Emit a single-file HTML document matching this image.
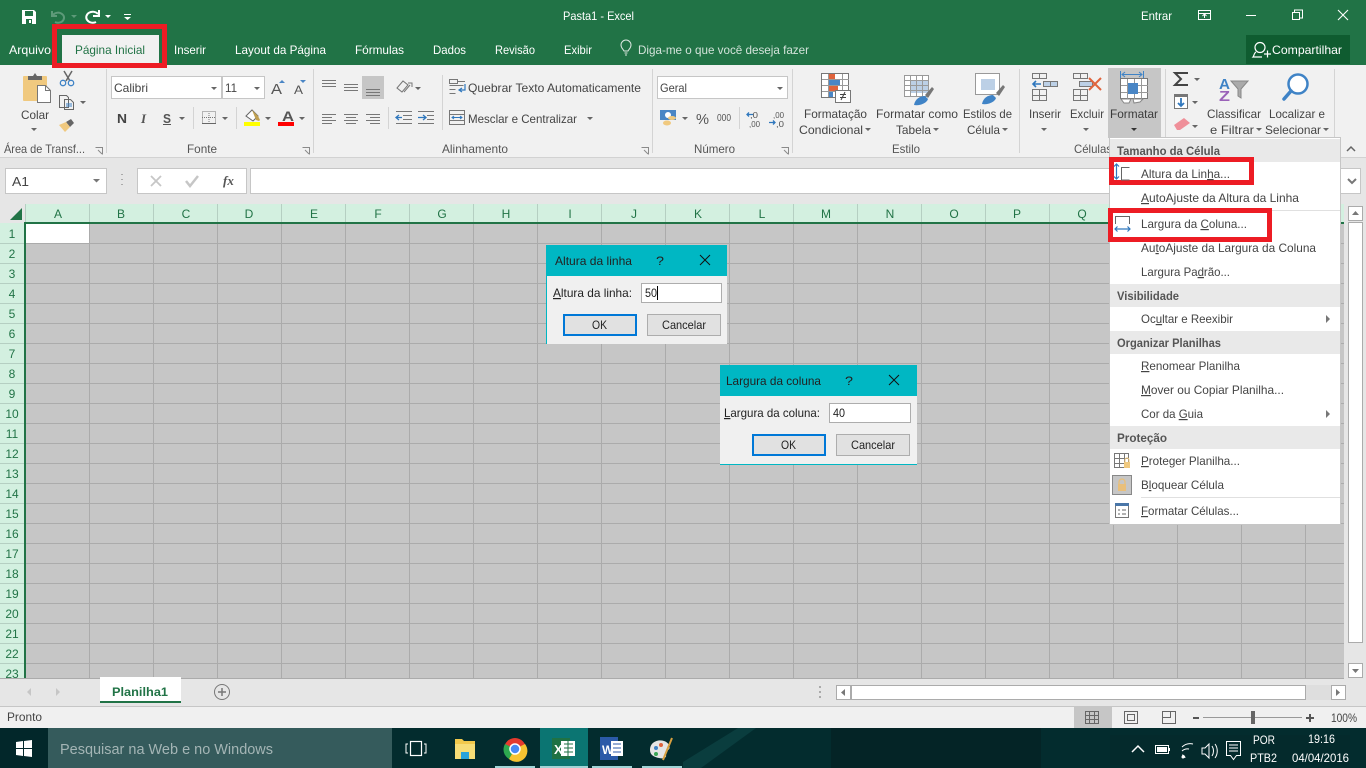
<!DOCTYPE html>
<html lang="pt-BR"><head><meta charset="utf-8"><title>Pasta1 - Excel</title>
<style>
html,body{margin:0;padding:0;width:1366px;height:768px;overflow:hidden;background:#e6e6e6}
svg{display:block;position:absolute;left:0;top:0}
text{font-family:"Liberation Sans",Arial,sans-serif;font-size:12px;fill:#444}
.w{fill:#fff}.t{fill:#e8f1ec}.g{fill:#217346}.b{font-weight:bold;fill:#555}.d{fill:#222}.s{fill:#dfe8e8}
.u{text-decoration:underline}
.l{fill:#555}
</style></head><body>
<svg width="1366" height="768" viewBox="0 0 1366 768" xmlns="http://www.w3.org/2000/svg">
<defs>
<pattern id="gr" x="25" y="224" width="64" height="20" patternUnits="userSpaceOnUse"><rect width="64" height="20" fill="#c6c6c6"/><rect x="0" width="1" height="20" fill="#ababab"/><rect y="19" width="64" height="1" fill="#ababab"/></pattern>
</defs>
<!-- title bar -->
<rect width="1366" height="66" fill="#217346"/>
<rect y="65" width="1366" height="92" fill="#f1f1f1"/>
<rect y="157" width="1366" height="1" fill="#d2d2d2"/>
<rect y="158" width="1366" height="46" fill="#e6e6e6"/>
<!-- QAT -->
<path d="M22 10h12l2 2v12H22z" fill="#fff"/><rect x="25" y="11" width="8" height="5" fill="#217346"/><rect x="26" y="19" width="6" height="5" fill="#217346"/><rect x="29" y="20" width="2" height="3" fill="#fff"/>
<path d="M53 15a6 5 0 1 1 2 7M52 11v5h5" fill="none" stroke="#5d9a79" stroke-width="2"/>
<path d="M98 14a6.500 5.500 0 1 0-2 8M99 10v6h-6" fill="none" stroke="#fff" stroke-width="2"/>
<path d="M71 15h6l-3 3z" fill="#5d9a79"/><path d="M105 15h6l-3 3z" fill="#fff"/>
<path d="M124 14h7v1h-7zM124 17h7l-3.500 3z" fill="#fff"/>
<text class="w" x="563" y="20" textLength="71" lengthAdjust="spacingAndGlyphs">Pasta1 - Excel</text>
<text class="w" x="1141" y="20" textLength="31" lengthAdjust="spacingAndGlyphs">Entrar</text>
<path d="M1198.500 10.500h12v9h-12zM1198.500 13.500h12M1204.500 18v-4M1202.500 16l2-2 2 2" fill="none" stroke="#fff"/>
<rect x="1246" y="15" width="10" height="1" fill="#fff"/>
<path d="M1292.500 12.500h7v7h-7zM1294.500 12v-2h8v8h-3" fill="none" stroke="#fff"/>
<path d="M1338 10l10 10M1348 10l-10 10" stroke="#fff" stroke-width="1.100"/>
<!-- tabs -->
<rect x="62" y="35" width="97" height="31" fill="#f1f1f1"/>
<text class="w" x="9" y="54" textLength="42" lengthAdjust="spacingAndGlyphs">Arquivo</text>
<text class="g" x="75" y="54" textLength="70" lengthAdjust="spacingAndGlyphs">Página Inicial</text>
<text class="w" x="174" y="54" textLength="32" lengthAdjust="spacingAndGlyphs">Inserir</text>
<text class="w" x="235" y="54" textLength="91" lengthAdjust="spacingAndGlyphs">Layout da Página</text>
<text class="w" x="355" y="54" textLength="49" lengthAdjust="spacingAndGlyphs">Fórmulas</text>
<text class="w" x="433" y="54" textLength="33" lengthAdjust="spacingAndGlyphs">Dados</text>
<text class="w" x="495" y="54" textLength="40" lengthAdjust="spacingAndGlyphs">Revisão</text>
<text class="w" x="564" y="54" textLength="28" lengthAdjust="spacingAndGlyphs">Exibir</text>
<path d="M624 51c-1-2-3-3-3-6a5 5 0 0 1 10 0c0 3-2 4-3 6zM624.500 53h3M625 55h2" fill="none" stroke="#dfe9e3"/>
<text class="t" style="fill:#d3e3da" x="638" y="54" textLength="171" lengthAdjust="spacingAndGlyphs">Diga-me o que você deseja fazer</text>
<rect x="1246" y="35" width="104" height="29" fill="#0f5c30"/>
<ellipse cx="1260" cy="47.500" rx="5" ry="5" fill="none" stroke="#fff" stroke-width="1.200"/><path d="M1256 52c-2 1-2 4-3 5h9M1264 54h7M1267.500 50.500v7" fill="none" stroke="#fff" stroke-width="1.200"/>
<text class="w" x="1272" y="54" textLength="70" lengthAdjust="spacingAndGlyphs">Compartilhar</text>
<!-- red box tab -->
<path d="M52 24h115v44H52zM57 29v34h105V29z" fill="#ed1c24" fill-rule="evenodd"/>
<!-- ribbon separators -->
<path d="M106.500 69v84M313.500 69v84M652.500 69v84M792.500 69v84M1019.500 69v84M1165.500 69v68M1334.500 69v68M193.500 107v22M236.500 107v22M388.500 107v22M442.500 75v55M739.500 107v22" stroke="#d4d4d4"/>
<!-- group labels -->
<text class="l" x="4" y="153" textLength="81" lengthAdjust="spacingAndGlyphs">Área de Transf...</text>
<text class="l" x="187" y="153" textLength="30" lengthAdjust="spacingAndGlyphs">Fonte</text>
<text class="l" x="442" y="153" textLength="66" lengthAdjust="spacingAndGlyphs">Alinhamento</text>
<text class="l" x="694" y="153" textLength="41" lengthAdjust="spacingAndGlyphs">Número</text>
<text class="l" x="892" y="153" textLength="28" lengthAdjust="spacingAndGlyphs">Estilo</text>
<text class="l" x="1074" y="153" textLength="38" lengthAdjust="spacingAndGlyphs">Células</text>
<path d="M95.500 147.500h7v7M98 150l4 4M302.500 147.500h7v7M305 150l4 4M641.500 147.500h7v7M644 150l4 4M781.500 147.500h7v7M784 150l4 4" fill="none" stroke="#8a8a8a"/>
<!-- clipboard -->
<rect x="23" y="76" width="24" height="25" rx="1" fill="#f0c97f"/><path d="M28 80v-4h5l2-3 2 3h5v4z" fill="#666"/>
<path d="M37.500 85.500h8l5 5v12h-13z" fill="#fff" stroke="#777"/><path d="M45.500 85.500v5h5" fill="none" stroke="#777"/>
<text class="d" style="fill:#444" x="21" y="119" textLength="28" lengthAdjust="spacingAndGlyphs">Colar</text>
<path d="M64 71l6 10M72 71l-6 10" stroke="#666" stroke-width="1.500"/><circle cx="63" cy="83" r="2.700" fill="none" stroke="#3f83c6" stroke-width="1.300"/><circle cx="71" cy="83" r="2.700" fill="none" stroke="#3f83c6" stroke-width="1.300"/>
<path d="M59.500 95.500h7l2 2v10h-9zM64.500 99.500h6l3 3v7h-9z" fill="#f1f1f1" stroke="#666"/><path d="M66 104h6M66 106h6" stroke="#3f83c6"/>
<path d="M66 122l5-3 3 4-4 4z" fill="#666"/><path d="M59 125l7-3 4 5-5 5z" fill="#f0c97f"/>
<!-- font controls -->
<rect x="111.500" y="76.500" width="110" height="22" fill="#fff" stroke="#c6c6c6"/><rect x="222.500" y="76.500" width="42" height="22" fill="#fff" stroke="#c6c6c6"/>
<text x="114" y="92" textLength="34" lengthAdjust="spacingAndGlyphs">Calibri</text>
<text x="225" y="92" textLength="12" lengthAdjust="spacingAndGlyphs">11</text>
<text x="271" y="94" style="font-size:15px;fill:#555" textLength="11" lengthAdjust="spacingAndGlyphs">A</text><path d="M279 83h6l-3-3z" fill="#4a86c5"/>
<text x="294" y="94" style="font-size:12px;fill:#555" textLength="9" lengthAdjust="spacingAndGlyphs">A</text><path d="M300 80h6l-3 3z" fill="#4a86c5"/>
<text x="117" y="123" style="font-weight:bold;font-size:13px;fill:#444" textLength="10" lengthAdjust="spacingAndGlyphs">N</text>
<text x="141" y="123" style="font-style:italic;font-family:'Liberation Serif',serif;font-weight:bold;font-size:13px;fill:#555">I</text>
<text x="163" y="123" style="font-weight:bold;font-size:13px;fill:#555" textLength="8" lengthAdjust="spacingAndGlyphs">S</text><rect x="163" y="124" width="8" height="1" fill="#555"/>
<path d="M202.500 111.500h13v12h-13zM209 111v12M202 117.500h14" fill="none" stroke="#777" stroke-dasharray="1 1"/><rect x="202" y="123" width="14" height="1" fill="#666"/>
<path d="M246 116l6-6 6 6-5 5z" fill="#fff" stroke="#666"/><path d="M252 110l6 6 2 4-1 1-3-1z" fill="#c0a050"/><rect x="244" y="122" width="16" height="4" fill="#ffff00"/>
<text x="282" y="121" style="font-size:14px;font-weight:bold;fill:#555" textLength="12" lengthAdjust="spacingAndGlyphs">A</text><rect x="278" y="122" width="16" height="4" fill="#ff0000"/>
<!-- alignment -->
<rect x="362" y="76" width="22" height="23" fill="#c6c6c6"/>
<path d="M322 80.500h14M322 83.500h14M322 86.500h14M344 84.500h14M344 87.500h14M344 90.500h14M366 89.500h14M366 92.500h14M366 95.500h14" stroke="#777"/>
<path d="M397 88l6-7 5 4-6 7zM404 92l6-7M408 83h4v4" fill="none" stroke="#777"/>
<path d="M322 114.500h14M322 117.500h10M322 120.500h14M322 123.500h10M344 114.500h14M346 117.500h10M344 120.500h14M346 123.500h10M366 114.500h14M370 117.500h10M366 120.500h14M370 123.500h10M396 111.500h16M403 115.500h9M403 119.500h9M396 123.500h16M418 111.500h16M427 115.500h7M427 119.500h7M418 123.500h16" stroke="#777"/>
<path d="M396 117.500h6M399 115l-3 2.500 3 2.500M418 117.500h7M423 115l3 2.500-3 2.500" fill="none" stroke="#2f77bd" stroke-width="1.300"/>
<path d="M449.500 79.500h8v4h-8zM457 81.500h8M449.500 85.500h14M449.500 89.500h6M449.500 93.500h6" fill="none" stroke="#777"/><path d="M465 84v6h-5M462 88l-3 2 3 2" fill="none" stroke="#2f77bd" stroke-width="1.200"/>
<text x="468" y="92" textLength="173" lengthAdjust="spacingAndGlyphs">Quebrar Texto Automaticamente</text>
<path d="M449.500 110.500h15v14h-15zM449.500 114.500h15M449.500 120.500h15" fill="none" stroke="#777"/><path d="M452 117.500h10M454 116l-2 1.500 2 1.500M460 116l2 1.500-2 1.500" fill="none" stroke="#2f77bd"/>
<text x="468" y="123" textLength="109" lengthAdjust="spacingAndGlyphs">Mesclar e Centralizar</text>
<!-- number -->
<rect x="657.500" y="76.500" width="130" height="22" fill="#fff" stroke="#c6c6c6"/>
<text x="660" y="92" textLength="27" lengthAdjust="spacingAndGlyphs">Geral</text>
<rect x="660" y="110" width="16" height="10" fill="#4a86c5"/><circle cx="668" cy="115" r="3" fill="#fff"/><ellipse cx="672" cy="118" rx="4" ry="2" fill="#f0c97f"/><ellipse cx="667" cy="123" rx="4" ry="2.500" fill="#f0c97f"/>
<text x="696" y="124" style="font-size:15px;fill:#555" textLength="13" lengthAdjust="spacingAndGlyphs">%</text>
<text x="717" y="121" style="font-size:10px;fill:#555" textLength="14" lengthAdjust="spacingAndGlyphs">000</text>
<text x="750" y="118" style="font-size:8px;fill:#555" textLength="8" lengthAdjust="spacingAndGlyphs">,0</text><text x="749" y="127" style="font-size:8px;fill:#555" textLength="11" lengthAdjust="spacingAndGlyphs">,00</text>
<text x="773" y="118" style="font-size:8px;fill:#555" textLength="11" lengthAdjust="spacingAndGlyphs">,00</text><text x="776" y="127" style="font-size:8px;fill:#555" textLength="8" lengthAdjust="spacingAndGlyphs">,0</text>
<path d="M747 114.500h6M749 112.500l-2 2 2 2M769 122.500h6M773 120.500l2 2-2 2" fill="none" stroke="#2f77bd" stroke-width="1.300"/>
<!-- cond fmt -->
<rect x="821.500" y="73.500" width="27" height="24" fill="#fff" stroke="#777"/><path d="M828.500 74v23M842.500 74v23M822 79.500h27M822 85.500h27M822 91.500h27" stroke="#999"/>
<rect x="829" y="74" width="6" height="5" fill="#e0633c"/><rect x="829" y="80" width="11" height="5" fill="#4a86c5"/><rect x="829" y="86" width="9" height="5" fill="#e0633c"/><rect x="829" y="92" width="4" height="5" fill="#4a86c5"/>
<rect x="835.500" y="90.500" width="15" height="12" fill="#fff" stroke="#777"/><path d="M840 94.500h6M840 97.500h6M845 92l-4 8" stroke="#444" fill="none"/>
<text x="804" y="118" textLength="63" lengthAdjust="spacingAndGlyphs">Formatação</text>
<text x="799" y="134" textLength="64" lengthAdjust="spacingAndGlyphs">Condicional</text>
<!-- table fmt -->
<rect x="904.500" y="75.500" width="24" height="21" fill="#fff" stroke="#999"/><rect x="910" y="80" width="18" height="13" fill="#bcd0e6"/><path d="M910.500 76v20M916.500 76v20M922.500 76v20M905 80.500h24M905 85.500h24M905 90.500h24" stroke="#9a9a9a"/>
<path d="M925 95l7-8 2 2-6 9z" fill="#777"/><path d="M914 105c1-6 6-9 11-9l3 3c-1 4-8 7-14 6z" fill="#3f83c6"/>
<text x="876" y="118" textLength="82" lengthAdjust="spacingAndGlyphs">Formatar como</text>
<text x="896" y="134" textLength="35" lengthAdjust="spacingAndGlyphs">Tabela</text>
<rect x="975.500" y="73.500" width="24" height="21" fill="#fff" stroke="#999"/><rect x="981" y="79" width="14" height="11" fill="#bcd0e6"/>
<path d="M996 93l7-8 2 2-6 9z" fill="#777"/><path d="M982 104c1-6 6-9 11-9l3 3c-1 4-8 7-14 6z" fill="#3f83c6"/>
<text x="963" y="118" textLength="49" lengthAdjust="spacingAndGlyphs">Estilos de</text>
<text x="967" y="134" textLength="33" lengthAdjust="spacingAndGlyphs">Célula</text>
<!-- cells -->
<path d="M1032.500 73.500h14v5h-14zM1039.500 73v5M1032.500 89.500h14v11h-14zM1039.500 90v11M1033 95.500h14" fill="none" stroke="#777"/>
<rect x="1043.500" y="81.500" width="14" height="5" fill="#bcd0e6" stroke="#777"/><path d="M1050.500 82v5" stroke="#777"/><path d="M1033 84h8M1036 81l-3 3 3 3" fill="none" stroke="#2f77bd" stroke-width="1.600"/>
<path d="M1073.500 73.500h14v5h-14zM1080.500 73v5M1073.500 89.500h14v11h-14zM1080.500 90v11M1074 95.500h14" fill="none" stroke="#777"/>
<rect x="1079.500" y="81.500" width="13" height="5" fill="#bcd0e6" stroke="#777"/>
<path d="M1089 78l12 12M1101 78l-12 12" stroke="#e0633c" stroke-width="2"/>
<text x="1029" y="118" textLength="32" lengthAdjust="spacingAndGlyphs">Inserir</text>
<text x="1070" y="118" textLength="34" lengthAdjust="spacingAndGlyphs">Excluir</text>
<rect x="1108" y="68" width="53" height="70" fill="#c6c6c6"/>
<path d="M1120.500 71v7M1143.500 71v7M1122 74.500h20M1125 72l-3 2.500 3 2.500M1139 72l3 2.500-3 2.500" fill="none" stroke="#3f83c6"/>
<rect x="1120.500" y="78.500" width="27" height="20" fill="#fff" stroke="#777"/><path d="M1127.500 79v20M1134.500 79v20M1141.500 79v20M1121 85.500h27M1121 92.500h27" stroke="#999"/><rect x="1128" y="83" width="10" height="11" fill="#4a86c5"/>
<path d="M1121 99h10l-2 4h-5zM1133 99h10l-3 3-6 1z" fill="#fff" stroke="#888"/>
<text x="1110" y="118" style="fill:#3a3a3a" textLength="48" lengthAdjust="spacingAndGlyphs">Formatar</text>
<!-- editing -->
<path d="M1188 73h-13l6 6-6 6h13" fill="none" stroke="#444" stroke-width="2"/>
<rect x="1174.500" y="94.500" width="13" height="14" fill="#fff" stroke="#777"/><rect x="1175" y="95" width="12" height="2" fill="#777"/><path d="M1181 98v8M1178 103l3 3 3-3" fill="none" stroke="#2f77bd" stroke-width="1.800"/>
<path d="M1174 125l10-7 6 5-10 7h-3z" fill="#ef8f99"/>
<text x="1219" y="89" style="font-size:15px;font-weight:bold;fill:#3f83c6" textLength="11" lengthAdjust="spacingAndGlyphs">A</text>
<text x="1219" y="101" style="font-size:15px;font-weight:bold;fill:#9a62b8" textLength="11" lengthAdjust="spacingAndGlyphs">Z</text>
<path d="M1231 81h17l-7 8v9l-3-2v-7z" fill="#aaa" stroke="#888"/>
<text x="1207" y="118" textLength="54" lengthAdjust="spacingAndGlyphs">Classificar</text>
<text x="1210" y="134" textLength="44" lengthAdjust="spacingAndGlyphs">e Filtrar</text>
<circle cx="1298" cy="84" r="9.500" fill="#fff" stroke="#3f83c6" stroke-width="2.500"/><path d="M1291 91l-7 8" stroke="#3f83c6" stroke-width="3.500" stroke-linecap="round"/>
<text x="1269" y="118" textLength="56" lengthAdjust="spacingAndGlyphs">Localizar e</text>
<text x="1265" y="134" textLength="56" lengthAdjust="spacingAndGlyphs">Selecionar</text>
<path d="M1347 151l4-4 4 4" fill="none" stroke="#666" stroke-width="1.500"/>
<!-- carets -->
<path d="M31 128h6l-3 3zM80 101h6l-3 3zM211 87h6l-3 3zM254 87h6l-3 3zM179 117h6l-3 3zM222 117h6l-3 3zM265 117h6l-3 3zM299 117h6l-3 3zM415 87h6l-3 3zM587 117h6l-3 3zM777 87h6l-3 3zM682 117h6l-3 3zM865 128h6l-3 3zM933 128h6l-3 3zM1002 128h6l-3 3zM1041 128h6l-3 3zM1083 128h6l-3 3zM1194 78h6l-3 3zM1192 101h6l-3 3zM1192 125h6l-3 3zM1256 128h6l-3 3zM1323 128h6l-3 3z" fill="#666"/>
<path d="M1131 128h6l-3 3z" fill="#333"/>
<!-- formula bar -->
<rect x="5.500" y="168.500" width="101" height="25" fill="#fff" stroke="#c6c6c6"/>
<text x="12" y="186" style="font-size:13px" textLength="17" lengthAdjust="spacingAndGlyphs">A1</text><path d="M93 179h7l-3.500 3.500z" fill="#777"/>
<path d="M122 174v1M122 179v1M122 184v1" stroke="#aaa" stroke-width="2"/>
<rect x="137.500" y="168.500" width="109" height="25" fill="#fff" stroke="#c6c6c6"/>
<rect x="250.500" y="168.500" width="1090" height="25" fill="#fff" stroke="#c6c6c6"/>
<rect x="1340.500" y="168.500" width="20" height="25" fill="#fff" stroke="#c6c6c6"/>
<path d="M1348 179l4 4 4-4" fill="none" stroke="#777" stroke-width="2"/>
<path d="M151 176l10 10M161 176l-10 10" stroke="#c6c6c6" stroke-width="1.800"/>
<path d="M186 181l4 5 8-10" fill="none" stroke="#c6c6c6" stroke-width="2.500"/>
<text x="223" y="185" style="font-family:'Liberation Serif',serif;font-style:italic;font-weight:bold;font-size:13px;fill:#555">fx</text>
<!-- grid -->
<rect x="26" y="224" width="1318" height="454" fill="url(#gr)"/>
<rect x="26" y="224" width="63" height="19" fill="#fff"/>
<rect x="0" y="204" width="1344" height="20" fill="#d3f0e0"/>
<rect x="0" y="204" width="25" height="19" fill="#e6e6e6"/>
<rect y="224" width="25" height="454" fill="#d3f0e0"/>
<path d="M22 208v12H10z" fill="#217346"/>
<path d="M25.500 204v18M89.500 204v18M153.500 204v18M217.500 204v18M281.500 204v18M345.500 204v18M409.500 204v18M473.500 204v18M537.500 204v18M601.500 204v18M665.500 204v18M729.500 204v18M793.500 204v18M857.500 204v18M921.500 204v18M985.500 204v18M1049.500 204v18M1113.500 204v18M0 243.500h24M0 263.500h24M0 283.500h24M0 303.500h24M0 323.500h24M0 343.500h24M0 363.500h24M0 383.500h24M0 403.500h24M0 423.500h24M0 443.500h24M0 463.500h24M0 483.500h24M0 503.500h24M0 523.500h24M0 543.500h24M0 563.500h24M0 583.500h24M0 603.500h24M0 623.500h24M0 643.500h24M0 663.500h24" stroke="#b5cfc2"/>
<rect x="24" y="222" width="1320" height="2" fill="#217346"/><rect x="24" y="222" width="2" height="456" fill="#217346"/>
<g>
<text class="g" x="58" y="218" text-anchor="middle">A</text><text class="g" x="121" y="218" text-anchor="middle">B</text><text class="g" x="186" y="218" text-anchor="middle">C</text><text class="g" x="249" y="218" text-anchor="middle">D</text><text class="g" x="314" y="218" text-anchor="middle">E</text><text class="g" x="378" y="218" text-anchor="middle">F</text><text class="g" x="442" y="218" text-anchor="middle">G</text><text class="g" x="506" y="218" text-anchor="middle">H</text><text class="g" x="570" y="218" text-anchor="middle">I</text><text class="g" x="634" y="218" text-anchor="middle">J</text><text class="g" x="698" y="218" text-anchor="middle">K</text><text class="g" x="762" y="218" text-anchor="middle">L</text><text class="g" x="826" y="218" text-anchor="middle">M</text><text class="g" x="890" y="218" text-anchor="middle">N</text><text class="g" x="954" y="218" text-anchor="middle">O</text><text class="g" x="1017" y="218" text-anchor="middle">P</text><text class="g" x="1082" y="218" text-anchor="middle">Q</text>
<text class="g" x="12" y="238" text-anchor="middle">1</text><text class="g" x="12" y="258" text-anchor="middle">2</text><text class="g" x="12" y="278" text-anchor="middle">3</text><text class="g" x="12" y="298" text-anchor="middle">4</text><text class="g" x="12" y="318" text-anchor="middle">5</text><text class="g" x="12" y="338" text-anchor="middle">6</text><text class="g" x="12" y="358" text-anchor="middle">7</text><text class="g" x="12" y="378" text-anchor="middle">8</text><text class="g" x="12" y="398" text-anchor="middle">9</text><text class="g" x="12" y="418" text-anchor="middle">10</text><text class="g" x="12" y="438" text-anchor="middle">11</text><text class="g" x="12" y="458" text-anchor="middle">12</text><text class="g" x="12" y="478" text-anchor="middle">13</text><text class="g" x="12" y="498" text-anchor="middle">14</text><text class="g" x="12" y="518" text-anchor="middle">15</text><text class="g" x="12" y="538" text-anchor="middle">16</text><text class="g" x="12" y="558" text-anchor="middle">17</text><text class="g" x="12" y="578" text-anchor="middle">18</text><text class="g" x="12" y="598" text-anchor="middle">19</text><text class="g" x="12" y="618" text-anchor="middle">20</text><text class="g" x="12" y="638" text-anchor="middle">21</text><text class="g" x="12" y="658" text-anchor="middle">22</text><text class="g" x="12" y="678" text-anchor="middle">23</text>
</g>
<!-- vertical scrollbar -->
<rect x="1344" y="204" width="22" height="474" fill="#e6e6e6"/>
<rect x="1348.500" y="206.500" width="14" height="14" fill="#fff" stroke="#ababab"/><path d="M1352 215l3.500-4 3.500 4z" fill="#777"/>
<rect x="1348.500" y="222.500" width="14" height="420" fill="#fff" stroke="#ababab"/>
<rect x="1348.500" y="663.500" width="14" height="14" fill="#fff" stroke="#ababab"/><path d="M1352 669l3.500 4 3.500-4z" fill="#777"/>
<!-- tab bar -->
<rect y="678" width="1366" height="28" fill="#e6e6e6"/>
<rect x="0" y="678" width="1344" height="1" fill="#ababab"/>
<rect x="100" y="677" width="81" height="26" fill="#fff"/><rect x="100" y="701" width="81" height="2" fill="#217346"/>
<text x="112" y="696" style="font-weight:bold;fill:#217346" textLength="56" lengthAdjust="spacingAndGlyphs">Planilha1</text>
<path d="M31 688v8l-4-4zM56 688v8l4-4z" fill="#c6c6c6"/>
<circle cx="222" cy="692" r="7.500" fill="none" stroke="#777"/><path d="M218 692h8M222 688v8" stroke="#777" stroke-width="1.500"/>
<path d="M820 686v2M820 691v2M820 696v2" stroke="#aaa" stroke-width="2"/>
<rect x="851" y="685" width="480" height="15" fill="#dedede"/>
<rect x="836.500" y="685.500" width="14" height="14" fill="#fff" stroke="#ababab"/><path d="M845 689v7l-4-3.500z" fill="#777"/>
<rect x="851.500" y="685.500" width="454" height="14" fill="#fff" stroke="#ababab"/>
<rect x="1331.500" y="685.500" width="14" height="14" fill="#fff" stroke="#ababab"/><path d="M1336 689v7l4-3.500z" fill="#777"/>
<!-- status -->
<rect y="706" width="1366" height="1" fill="#c6c6c6"/><rect y="707" width="1366" height="21" fill="#f0f0f0"/>
<text x="7" y="721" textLength="35" lengthAdjust="spacingAndGlyphs">Pronto</text>
<rect x="1074" y="707" width="38" height="21" fill="#c6c6c6"/>
<path d="M1085.500 711.500h13v12h-13zM1089.500 712v12M1094.500 712v12M1086 715.500h13M1086 719.500h13" fill="none" stroke="#666"/>
<path d="M1124.500 711.500h13v12h-13zM1127.500 714.500h7v6h-7z" fill="none" stroke="#666"/>
<path d="M1162.500 711.500h13v12h-13zM1162 717.500h8M1170.500 712v6" fill="none" stroke="#666"/>
<rect x="1193" y="717" width="6" height="2" fill="#555"/><rect x="1203" y="717" width="99" height="1" fill="#999"/><rect x="1251" y="711" width="4" height="13" fill="#666"/><path d="M1306 718h8M1310 714v8" stroke="#555" stroke-width="2"/>
<text x="1331" y="722" textLength="26" lengthAdjust="spacingAndGlyphs">100%</text>
<!-- dialog 1 -->
<rect x="546" y="245" width="181" height="99" fill="#f0f0f0"/><rect x="546" y="245" width="181" height="31" fill="#00b7c3"/><rect x="546" y="245" width="1" height="99" fill="#00b7c3"/>
<text x="555" y="265" class="d" textLength="77" lengthAdjust="spacingAndGlyphs">Altura da linha</text>
<text x="656" y="265" class="d" textLength="8" lengthAdjust="spacingAndGlyphs">?</text>
<path d="M700 255l10 10M710 255l-10 10" stroke="#111"/>
<text x="553" y="297" class="d" textLength="79" lengthAdjust="spacingAndGlyphs"><tspan class="u">A</tspan>ltura da linha:</text>
<rect x="641.500" y="283.500" width="80" height="19" fill="#fff" stroke="#adadad"/>
<text x="645" y="297" class="d" textLength="12" lengthAdjust="spacingAndGlyphs">50</text><rect x="657" y="286" width="1" height="14" fill="#000"/>
<rect x="564" y="315" width="72" height="20" fill="#e1e1e1" stroke="#0078d7" stroke-width="2"/>
<text x="592" y="329" class="d" textLength="15" lengthAdjust="spacingAndGlyphs">OK</text>
<rect x="647.500" y="314.500" width="73" height="21" fill="#e1e1e1" stroke="#adadad"/>
<text x="662" y="329" class="d" textLength="44" lengthAdjust="spacingAndGlyphs">Cancelar</text>
<!-- dialog 2 -->
<rect x="720" y="365" width="197" height="100" fill="#f0f0f0"/><rect x="720" y="365" width="197" height="31" fill="#00b7c3"/><rect x="720" y="464" width="197" height="1" fill="#00b7c3"/>
<text x="726" y="385" class="d" textLength="95" lengthAdjust="spacingAndGlyphs">Largura da coluna</text>
<text x="845" y="385" class="d" textLength="8" lengthAdjust="spacingAndGlyphs">?</text>
<path d="M889 375l10 10M899 375l-10 10" stroke="#111"/>
<text x="724" y="417" class="d" textLength="96" lengthAdjust="spacingAndGlyphs"><tspan class="u">L</tspan>argura da coluna:</text>
<rect x="829.500" y="403.500" width="81" height="19" fill="#fff" stroke="#adadad"/>
<text x="833" y="417" class="d" textLength="12" lengthAdjust="spacingAndGlyphs">40</text>
<rect x="753" y="435" width="72" height="20" fill="#e1e1e1" stroke="#0078d7" stroke-width="2"/>
<text x="781" y="449" class="d" textLength="15" lengthAdjust="spacingAndGlyphs">OK</text>
<rect x="836.500" y="434.500" width="73" height="21" fill="#e1e1e1" stroke="#adadad"/>
<text x="851" y="449" class="d" textLength="44" lengthAdjust="spacingAndGlyphs">Cancelar</text>
<!-- menu -->
<rect x="1109.500" y="137.500" width="231" height="387" fill="#fff" stroke="#c6c6c6"/>
<rect x="1110" y="139" width="230" height="23" fill="#e9e9e9"/><rect x="1110" y="284" width="230" height="23" fill="#e9e9e9"/><rect x="1110" y="331" width="230" height="23" fill="#e9e9e9"/><rect x="1110" y="426" width="230" height="23" fill="#e9e9e9"/>
<path d="M1141 210.500h199M1141 497.500h199" stroke="#e0e0e0"/>
<!-- red boxes -->
<path d="M1109 157h145v28h-145zM1114 162v18h135v-18z" fill="#ed1c24" fill-rule="evenodd"/>
<path d="M1108 208h164v34h-164zM1113 213v24h154v-24z" fill="#ed1c24" fill-rule="evenodd"/>
<text class="b" x="1117" y="155" textLength="103" lengthAdjust="spacingAndGlyphs">Tamanho da Célula</text>
<text class="b" x="1117" y="300" textLength="62" lengthAdjust="spacingAndGlyphs">Visibilidade</text>
<text class="b" x="1117" y="347" textLength="104" lengthAdjust="spacingAndGlyphs">Organizar Planilhas</text>
<text class="b" x="1117" y="442" textLength="50" lengthAdjust="spacingAndGlyphs">Proteção</text>
<text x="1141" y="178" textLength="89" lengthAdjust="spacingAndGlyphs">Altura da Lin<tspan class="u">h</tspan>a...</text>
<text x="1141" y="202" textLength="158" lengthAdjust="spacingAndGlyphs"><tspan class="u">A</tspan>utoAjuste da Altura da Linha</text>
<text x="1141" y="228" textLength="106" lengthAdjust="spacingAndGlyphs">Largura da <tspan class="u">C</tspan>oluna...</text>
<text x="1141" y="252" textLength="175" lengthAdjust="spacingAndGlyphs">Au<tspan class="u">t</tspan>oAjuste da Largura da Coluna</text>
<text x="1141" y="276" textLength="89" lengthAdjust="spacingAndGlyphs">Largura Pa<tspan class="u">d</tspan>rão...</text>
<text x="1141" y="323" textLength="92" lengthAdjust="spacingAndGlyphs">Oc<tspan class="u">u</tspan>ltar e Reexibir</text>
<text x="1141" y="370" textLength="99" lengthAdjust="spacingAndGlyphs"><tspan class="u">R</tspan>enomear Planilha</text>
<text x="1141" y="394" textLength="143" lengthAdjust="spacingAndGlyphs"><tspan class="u">M</tspan>over ou Copiar Planilha...</text>
<text x="1141" y="418" textLength="62" lengthAdjust="spacingAndGlyphs">Cor da <tspan class="u">G</tspan>uia</text>
<text x="1141" y="465" textLength="99" lengthAdjust="spacingAndGlyphs"><tspan class="u">P</tspan>roteger Planilha...</text>
<text x="1141" y="489" textLength="83" lengthAdjust="spacingAndGlyphs">B<tspan class="u">l</tspan>oquear Célula</text>
<text x="1141" y="515" textLength="98" lengthAdjust="spacingAndGlyphs"><tspan class="u">F</tspan>ormatar Células...</text>
<path d="M1326 315v8l4-4zM1326 410v8l4-4z" fill="#777"/>
<path d="M1116.500 164v15M1114 166.500l2.500-2.500 2.500 2.500M1114 176.500l2.500 2.500 2.500-2.500" fill="none" stroke="#2f77bd" stroke-width="1.200"/><path d="M1129.500 167.500h-8v12.500h8" fill="none" stroke="#666"/>
<path d="M1115.500 224v-7.500h14v7.500" fill="none" stroke="#666"/><path d="M1115 229h15M1117.500 226.500l-2.500 2.500 2.500 2.500M1127.500 226.500l2.500 2.500-2.500 2.500" fill="none" stroke="#2f77bd" stroke-width="1.200"/>
<path d="M1114.500 453.500h14v14h-14zM1119.500 454v13M1124.500 454v13M1115 458.500h14M1115 463.500h14" fill="none" stroke="#777"/><rect x="1124" y="462" width="6" height="6" fill="#f0c97f"/><path d="M1125 462v-2a2 2 0 0 1 4 0v2" fill="none" stroke="#f0c97f"/>
<rect x="1112.500" y="475.500" width="19" height="19" fill="#c6c6c6" stroke="#888"/><rect x="1118" y="484" width="8" height="7" fill="#e9bf7a"/><path d="M1119 484v-2a3 3 0 0 1 6 0v2" fill="none" stroke="#e9bf7a" stroke-width="1.300"/>
<rect x="1115.500" y="504.500" width="13" height="13" fill="#fff" stroke="#777"/><rect x="1115" y="503" width="14" height="3" fill="#4a76a8"/><path d="M1118 510h2M1118 514h2M1122 510h4M1122 514h4" stroke="#666"/>
<!-- taskbar -->
<rect y="728" width="1366" height="40" fill="#032c2e"/>
<path d="M683 762l55-34h18l-55 40h-18z" fill="#0a3d3e"/>
<rect x="831" y="728" width="210" height="40" fill="#042426"/>
<rect x="1110" y="735" width="240" height="30" fill="#042a2c"/>
<rect y="728" width="48" height="40" fill="#02272a"/>
<rect x="48" y="728" width="344" height="40" fill="#355b5c"/>
<rect x="540" y="728" width="48" height="40" fill="#0b7572"/>
<path d="M16 742l7-1v7h-7zM24 741l8-1v8h-8zM16 749h7v7l-7-1zM24 749h8v8l-8-1z" fill="#fff"/>
<text x="60" y="754" style="font-size:15px;fill:#a4b5b5" textLength="213" lengthAdjust="spacingAndGlyphs">Pesquisar na Web e no Windows</text>
<rect x="410.500" y="741.500" width="11" height="14" fill="none" stroke="#fff" stroke-width="1.200"/><path d="M408 744h-2v9h2M424 744h2v9h-2" fill="none" stroke="#fff"/>
<path d="M455 739h7l2 2h11v18h-20z" fill="#f2c94c"/><rect x="455" y="744" width="20" height="15" fill="#f7dd77"/><rect x="461" y="752" width="8" height="7" fill="#2aa3dc"/>
<circle cx="515" cy="749" r="11" fill="#e53a2e"/><path d="M515 749L505 744A11 11 0 0 0 509 759z" fill="#2da94f"/><path d="M515 749l10-5A11 11 0 0 1 509 759z" fill="#f7c431"/><circle cx="515" cy="749" r="5" fill="#4a8af4" stroke="#fff" stroke-width="1.500"/>
<rect x="552" y="738" width="18" height="21" fill="#1f7244"/><rect x="561" y="741" width="14" height="15" fill="#fff"/><path d="M564 744h9M564 748h9M564 752h9M568 741v15" stroke="#1f7244"/><text x="554" y="754" style="font-size:13px;font-weight:bold;fill:#fff">X</text>
<rect x="600" y="737" width="18" height="23" fill="#2b5aa8"/><rect x="611" y="741" width="12" height="15" fill="#fff"/><path d="M613 744h8M613 748h8M613 752h8" stroke="#2b5aa8"/><text x="602" y="754" style="font-size:12px;font-weight:bold;fill:#fff">W</text>
<path d="M650 750c0-8 8-11 14-9 6 2 7 8 4 9-3 1-3 3-2 5 1 3-3 4-7 3-5-1-9-3-9-8z" fill="#e5e5e5"/><circle cx="656" cy="748" r="2" fill="#3f83c6"/><circle cx="661" cy="745" r="2" fill="#e0633c"/><circle cx="656" cy="754" r="2" fill="#3aa655"/><path d="M672 738l-9 22" stroke="#d8a040" stroke-width="2"/>
<rect x="495" y="766" width="40" height="2" fill="#9fd4d6"/><rect x="540" y="766" width="48" height="2" fill="#9fd4d6"/><rect x="592" y="766" width="40" height="2" fill="#9fd4d6"/><rect x="642" y="766" width="40" height="2" fill="#9fd4d6"/>
<path d="M1132 752l6-6 6 6" fill="none" stroke="#fff" stroke-width="1.500"/>
<rect x="1155.500" y="745.500" width="13" height="8" fill="none" stroke="#fff"/><rect x="1157" y="747" width="10" height="5" fill="#fff"/><rect x="1169" y="748" width="1" height="3" fill="#fff"/>
<path d="M1182 755a3 3 0 0 1 3 3M1182 751a8 8 0 0 1 7-2M1182 747a12 12 0 0 1 11-3" fill="none" stroke="#fff"/><circle cx="1183" cy="757" r="1.500" fill="#fff"/>
<path d="M1202 748h3l4-4v14l-4-4h-3zM1212 746c2 3 2 7 0 10M1215 744c3 4 3 10 0 14" fill="none" stroke="#fff"/>
<path d="M1226.500 741.500h14v14h-4l-3 4-3-4h-4zM1229 745h9M1229 748h9M1229 751h9" fill="none" stroke="#fff"/>
<text class="w" x="1253" y="744" textLength="22" lengthAdjust="spacingAndGlyphs">POR</text>
<text class="w" x="1250" y="762" textLength="27" lengthAdjust="spacingAndGlyphs">PTB2</text>
<text class="w" x="1308" y="743" textLength="27" lengthAdjust="spacingAndGlyphs">19:16</text>
<text class="w" x="1292" y="762" textLength="57" lengthAdjust="spacingAndGlyphs">04/04/2016</text>
</svg>
</body></html>
